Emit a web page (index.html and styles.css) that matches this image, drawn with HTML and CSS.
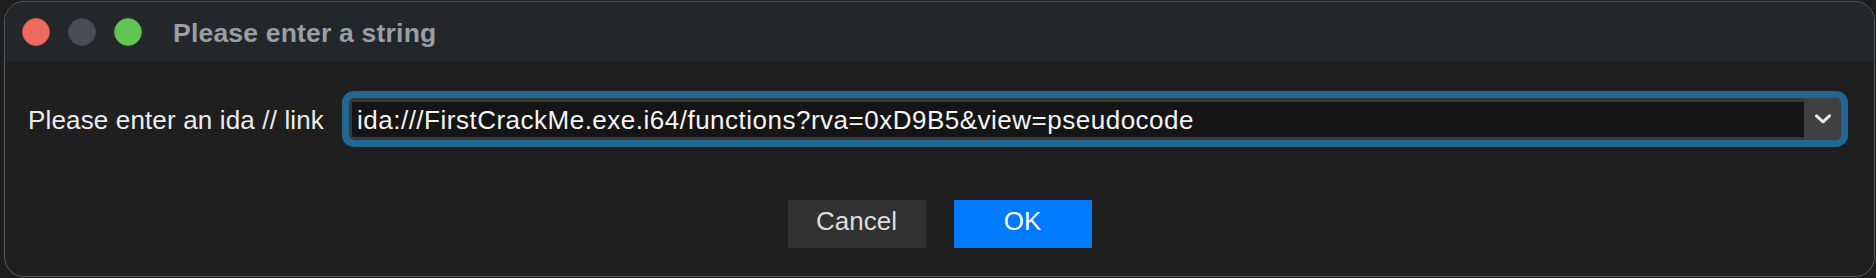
FILE: index.html
```html
<!DOCTYPE html>
<html>
<head>
<meta charset="utf-8">
<link rel="stylesheet" href="styles.css">
</head>
<body>
<div class="window">
  <div class="titlebar">
    <div class="lights">
      <span class="light red"></span>
      <span class="light gray"></span>
      <span class="light green"></span>
    </div>
    <div class="title">Please enter a string</div>
  </div>
  <div class="content">
    <div class="row">
      <label class="label">Please enter an ida // link</label>
      <div class="combo">
        <div class="field">ida:///FirstCrackMe.exe.i64/functions?rva=0xD9B5&amp;view=pseudocode</div>
        <div class="drop">
          <svg width="16" height="10" viewBox="0 0 16 10"><path d="M1.5 1.8 L8 7.8 L14.5 1.8" fill="none" stroke="#e8e8e8" stroke-width="3" stroke-linecap="round" stroke-linejoin="round"/></svg>
        </div>
      </div>
    </div>
    <div class="buttons">
      <button class="btn cancel">Cancel</button>
      <button class="btn ok">OK</button>
    </div>
  </div>
</div>
</body>
</html>
```
FILE: styles.css
```css
html, body {
  margin: 0;
  padding: 0;
  background: #1e1e1e;
  font-family: "Liberation Sans", Arial, sans-serif;
}
.window {
  box-sizing: border-box;
  margin: 1px 1px 0 4px;
  height: 276px;
  border: 1px solid #56595c;
  border-radius: 20px;
  background: #1f1f1f;
  overflow: hidden;
  display: flex;
  flex-direction: column;
}
.titlebar {
  height: 60px;
  background: #24272a;
  display: flex;
  align-items: center;
  padding-left: 17px;
  flex: 0 0 auto;
}
.lights {
  display: flex;
  gap: 18px;
}
.light {
  width: 28px;
  height: 28px;
  border-radius: 50%;
  box-sizing: border-box;
}
.red { background: #ee6a5f; border: 1px solid #d4564c; }
.gray { background: #4a4d51; border: 1px solid #45484c; }
.green { background: #61c554; border: 1px solid #52ad45; }
.title {
  margin-left: 31px;
  font-weight: bold;
  font-size: 26.5px;
  letter-spacing: 0.2px;
  color: #9b9ea2;
  margin-top: 3px;
}
.content {
  display: flex;
  flex-direction: column;
}
.row {
  display: flex;
  align-items: center;
  margin-top: 36px;
  padding-left: 23px;
  padding-right: 33px;
}
.label {
  flex: 0 0 321px;
  font-size: 26px;
  letter-spacing: 0.15px;
  color: #ececec;
  margin-top: 3px;
}
.combo {
  flex: 1;
  box-sizing: border-box;
  height: 42px;
  display: flex;
  border: 3px solid #383838;
  border-top-width: 4px;
  border-radius: 5px;
  background: #151515;
  box-shadow: 0 0 0 7px #216794;
}
.field {
  flex: 1;
  display: flex;
  align-items: center;
  padding-left: 5px;
  padding-top: 2px;
  font-size: 26px;
  letter-spacing: 0.5px;
  color: #f4f4f4;
  white-space: nowrap;
  overflow: hidden;
}
.drop {
  width: 37px;
  margin: -4px -3px -3px 0;
  background: #404040;
  border-radius: 0 6px 6px 0;
  display: flex;
  align-items: center;
  justify-content: center;
}
.buttons {
  display: flex;
  justify-content: center;
  gap: 28px;
  margin-top: 60px;
}
.btn {
  width: 138px;
  height: 48px;
  border: none;
  border-radius: 0;
  font-family: "Liberation Sans", Arial, sans-serif;
  font-size: 26px;
  padding: 0 0 5px 0;
}
.cancel {
  background: #313131;
  color: #dedede;
}
.ok {
  background: #007aff;
  color: #ffffff;
}
```
